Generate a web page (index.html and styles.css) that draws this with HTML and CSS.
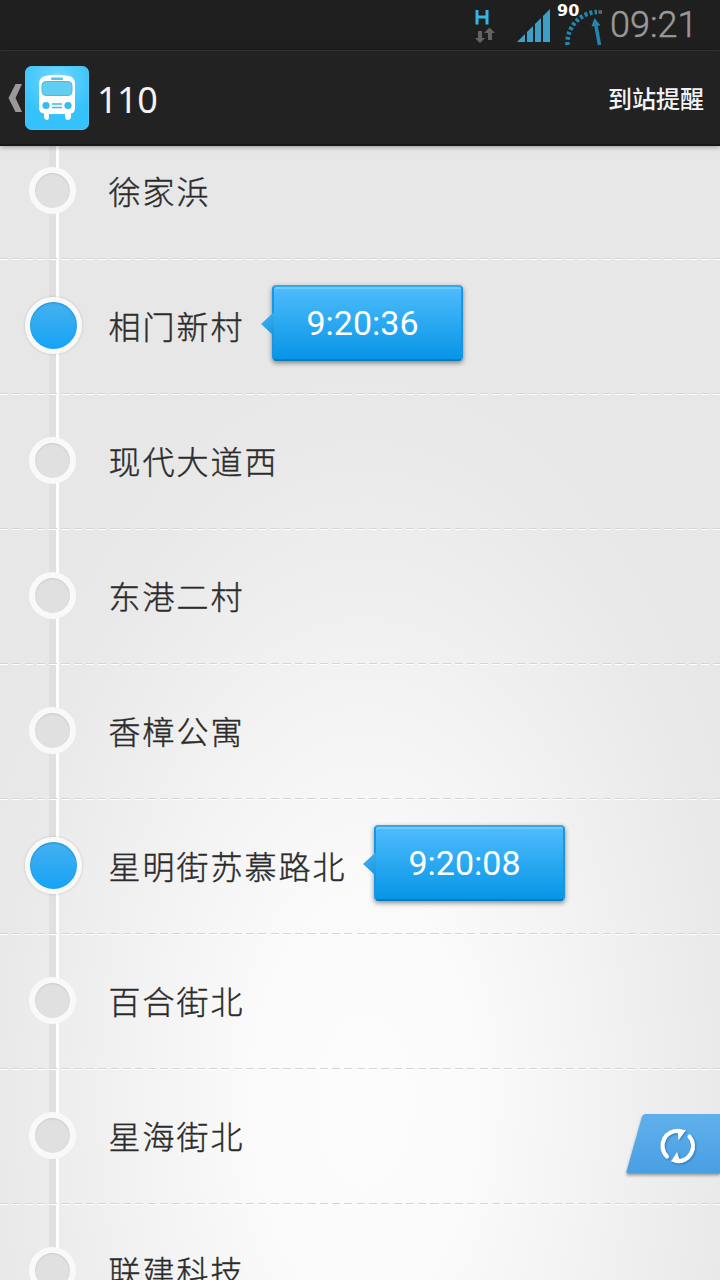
FILE: index.html
```html
<!DOCTYPE html>
<html lang="zh-CN">
<head>
<meta charset="utf-8">
<title>110</title>
<link rel="stylesheet" href="styles.css">
</head>
<body>
<div class="screen">
  <header class="status">
    <svg class="status-icons" width="146" height="50" viewBox="0 0 146 50">
      <path d="M17 10V24.500M27 10V24.500M17 17H27" fill="none" stroke="#33b5e5" stroke-width="3"/>
      <path d="M18 31h4v7h3l-5 5-5-5h3zM28 40h4v-7h3l-5.500-5.500-5.500 5.500h4z" fill="#636363"/>
      <path d="M57 42L90 9V42Z" fill="#3d9fc6"/>
      <path d="M66 30V42M74 22V42M82 14V42" stroke="#1f1f1f" stroke-width="2"/>
      <path d="M107.500 45A31 31 0 0 1 137 12" fill="none" stroke="#2287b0" stroke-width="4.500" stroke-dasharray="3 2.200"/>
      <path d="M138.500 12h3.500" stroke="#686868" stroke-width="3.500"/>
      <path d="M139.500 45L136 26" stroke="#2287b0" stroke-width="3.500"/>
      <path d="M134.500 18L131.500 26.500L140.500 25.500Z" fill="#2287b0"/>
      <text class="gauge-value" x="97" y="15.500">90</text>
    </svg>
    <span class="clock">09:21</span>
  </header>
  <nav class="bar">
    <svg class="back" width="14" height="28" viewBox="0 0 14 28"><path d="M7.500 0H14L7.500 14L14 28H7.500L0.500 14Z" fill="#999"/></svg>
    <svg class="logo" width="64" height="64" viewBox="0 0 64 64">
      <defs><radialGradient id="sky" cx=".5" cy=".2" r=".6"><stop offset="0" stop-color="#74d8ff"/><stop offset="1" stop-color="#35c2fb"/></radialGradient></defs>
      <rect x=".5" y=".5" width="63" height="63" rx="6" fill="url(#sky)" stroke="#50c8f5"/>
      <path d="M20 10Q32 7.500 44 10Q50 11.500 50 18V42Q50 47 46 47.500V50.500Q46 54 42 54Q40 53.500 40 50.500V48H24V50.500Q24 54 22 54Q19 53.500 19 50.500V47.500Q14 47 14 42V18Q14 11.500 20 10Z" fill="#fff"/>
      <rect x="17" y="15.500" width="30" height="14" rx="4" fill="#62ceef" stroke="#43bce5"/>
      <rect x="26" y="11.500" width="12" height="2.500" rx="1" fill="#50c4eb"/>
      <circle cx="21" cy="39.500" r="3.600" fill="#36bced"/><circle cx="43" cy="39.500" r="3.600" fill="#36bced"/>
      <path d="M27 38H37M27 41.500H37" stroke="#36bced" stroke-width="1.500"/>
    </svg>
    <h1 class="title">110</h1>
    <span class="action">到站提醒</span>
  </nav>
  <main class="list">
    <div class="row"><i class="node"></i><span class="name">徐家浜</span></div>
    <div class="row"><i class="node live"></i><span class="name">相门新村</span><span class="bubble">9:20:36</span></div>
    <div class="row"><i class="node"></i><span class="name">现代大道西</span></div>
    <div class="row"><i class="node"></i><span class="name">东港二村</span></div>
    <div class="row"><i class="node"></i><span class="name">香樟公寓</span></div>
    <div class="row"><i class="node live"></i><span class="name">星明街苏慕路北</span><span class="bubble">9:20:08</span></div>
    <div class="row"><i class="node"></i><span class="name">百合街北</span></div>
    <div class="row"><i class="node"></i><span class="name">星海街北</span></div>
    <div class="row"><i class="node"></i><span class="name">联建科技</span></div>
  </main>
  <svg class="refresh" width="100" height="70" viewBox="0 0 100 70">
    <defs><linearGradient id="blue" x2="0" y2="1"><stop offset="0" stop-color="#61b0ec"/><stop offset="1" stop-color="#489fe2"/></linearGradient></defs>
    <path class="refresh-tab" d="M25 4H100V63.500H8Q6 63.500 6.500 61.500L22 6.500Q22.800 4 25 4Z" fill="url(#blue)"/>
    <g class="refresh-arrows">
      <path d="M47 46.500A15 15 0 0 1 60 21M69.500 26.500A15 15 0 0 1 56 51" fill="none" stroke="#fff" stroke-width="4.200" stroke-linecap="round"/>
      <path d="M56 19L66 20L58.500 30.500L58 24ZM60 53L51 51.500L57 42L59 48Z" fill="#fff"/>
    </g>
  </svg>
</div>
</body>
</html>
```
FILE: styles.css
```css
* { box-sizing: border-box; }
body { margin: 0; font-family: Roboto, "Noto Sans CJK SC", sans-serif; }
.screen {
  position: relative;
  display: flex;
  flex-direction: column;
  width: 720px;
  height: 1280px;
  overflow: hidden;
  background: radial-gradient(ellipse 430px 780px at 365px 1100px, #fcfcfc 0, #fafafa 28%, #f2f2f2 55%, #e9e9e9 85%, #e7e7e7 100%);
}
.status {
  flex: none;
  display: flex;
  height: 50px;
  padding-left: 460px;
  background: #1f1f1f;
}
.status-icons { flex: none; }
.gauge-value { font: bold 16px "DejaVu Sans", sans-serif; fill: #fff; }
.clock { margin-left: 4px; font-size: 36px; font-weight: 300; line-height: 50px; color: #999; -webkit-text-stroke: .5px #999; }
.bar {
  flex: none;
  z-index: 1;
  display: flex;
  align-items: center;
  height: 96px;
  padding: 0 16px 0 8px;
  border-top: 1px solid #303030;
  border-bottom: 2px solid #171717;
  background: #222;
  box-shadow: 0 1px 5px rgba(0, 0, 0, .35);
}
.logo { margin-left: 3px; }
.title { margin: 4px 0 0 8px; font-size: 36px; font-weight: 400; line-height: 48px; color: #f3f3f3; font-family: "Noto Sans", sans-serif; letter-spacing: -.5px; }
.action { margin-left: auto; font: 500 24px/32px "Noto Sans CJK SC", sans-serif; color: #f3f3f3; }
.list {
  flex: 1;
  display: flex;
  flex-direction: column;
  justify-content: flex-end;
  overflow: hidden;
  margin-bottom: -60px;
  background: linear-gradient(90deg, #e0e0e0 0 7px, #fefefe 7px 10px) 49px 0 / 10px 100% no-repeat;
}
.row {
  flex: none;
  display: flex;
  align-items: center;
  height: 135px;
  padding: 0 0 4px 29px;
  background:
    repeating-linear-gradient(90deg, #d5d5d5 0 8px, transparent 8px 12.3px) 0 133px / 100% 1px no-repeat,
    repeating-linear-gradient(90deg, #fff 0 8px, transparent 8px 12.3px) 0 134px / 100% 1px no-repeat;
}
.node {
  flex: none;
  width: 47px;
  height: 47px;
  margin-right: 32.5px;
  border: 6.5px solid #f9f9f9;
  border-radius: 50%;
  background: #e0e0e0;
  box-shadow: inset 0 1px 2px #c8c8c8;
}
.live {
  width: 57px;
  height: 57px;
  margin: 0 26.5px 0 -4px;
  border-width: 5px;
  background: linear-gradient(#45b1ef, #16a3f6);
  box-shadow: inset 0 1px 2px #168ed0, 0 0 3px rgba(0, 0, 0, .18);
}
.name {
  margin-top: -2px;
  font: 300 32px/48px "Noto Sans CJK SC", sans-serif;
  letter-spacing: 2px;
  color: #2b2b2b;
  -webkit-text-stroke: .4px #2b2b2b;
}
.bubble {
  position: relative;
  width: 191px;
  height: 76px;
  margin: -5px 0 0 27.5px;
  border: 2px solid;
  border-color: #35a7ed #1a96e0 #087bbd;
  border-radius: 4px;
  background: linear-gradient(#4fbcfd, #0795e6);
  box-shadow: 0 2px 5px rgba(0, 0, 0, .45), inset 0 2px #6fcbff;
  font-size: 34px;
  line-height: 73px;
  padding-right: 10px;
  text-align: center;
  color: #fff;
}
.bubble::before {
  content: "";
  position: absolute;
  left: -13px;
  top: 25px;
  width: 13px;
  height: 24px;
  background: linear-gradient(135deg, #48b4f4, #1996dc);
  clip-path: polygon(100% 0, 0 50%, 100% 100%);
}
.refresh { position: absolute; right: 0; top: 1110px; }
.refresh-tab { filter: drop-shadow(0 2px 1.5px rgba(0, 0, 0, .35)); }
.refresh-arrows { filter: drop-shadow(1px 1px 1px rgba(0, 60, 110, .4)); }
```
